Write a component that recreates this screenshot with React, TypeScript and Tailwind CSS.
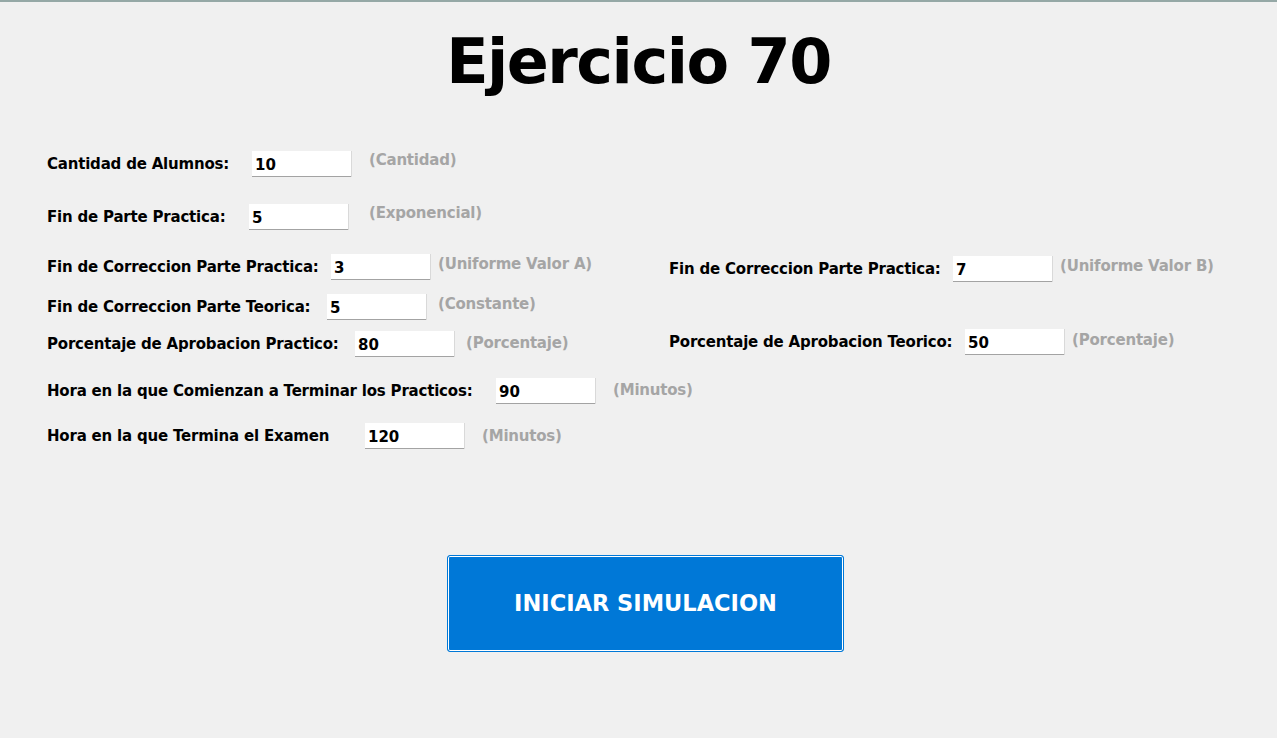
import React from 'react';

const font = { fontFamily: '"DejaVu Sans", sans-serif' };

interface FieldProps {
    label: string;
    value: string;
    hint: string;
    labelW: string;
    hintGap: string;
    hintLift: string;
}

const Field: React.FC<FieldProps> = ({ label, value, hint, labelW, hintGap, hintLift }) => (
    <div className="flex items-center h-[26px]">
        <span className={`${labelW} shrink-0 text-[15px] font-bold text-black whitespace-nowrap tracking-[-0.2px]`}>{label}</span>
        <input
            defaultValue={value}
            className="w-[99px] h-[26px] shrink-0 bg-white border-b border-[#a3a3a3] shadow-[1px_0_0_#d9d9d9] px-[3px] pt-[2px] text-[15px] font-bold text-black outline-none"
            style={font}
        />
        <span className={`${hintGap} ${hintLift} text-[15px] font-bold text-[#a5a5a5] whitespace-nowrap tracking-[-0.2px]`}>{hint}</span>
    </div>
);

export default function App() {
    return (
        <div className="min-h-screen bg-[#f0f0f0] border-t-2 border-[#95a8a6]" style={font}>
            <h1 className="text-center text-[62px] leading-none font-bold text-black tracking-[-1.5px] pt-[29px]">
                Ejercicio 70
            </h1>

            <div className="pl-[47px] pt-[58px]">
                <Field label="Cantidad de Alumnos:" value="10" hint="(Cantidad)" labelW="w-[205px]" hintGap="ml-[18px]" hintLift="mb-[8px]" />

                <div className="mt-[27px]">
                    <Field label="Fin de Parte Practica:" value="5" hint="(Exponencial)" labelW="w-[202px]" hintGap="ml-[21px]" hintLift="mb-[8px]" />
                </div>

                <div className="mt-[24px] flex items-start h-[26px]">
                    <div className="w-[622px] shrink-0">
                        <Field label="Fin de Correccion Parte Practica:" value="3" hint="(Uniforme Valor A)" labelW="w-[284px]" hintGap="ml-[8px]" hintLift="mb-[6px]" />
                    </div>
                    <div className="mt-[2px]">
                        <Field label="Fin de Correccion Parte Practica:" value="7" hint="(Uniforme Valor B)" labelW="w-[284px]" hintGap="ml-[8px]" hintLift="mb-[6px]" />
                    </div>
                </div>

                <div className="mt-[14px]">
                    <Field label="Fin de Correccion Parte Teorica:" value="5" hint="(Constante)" labelW="w-[280px]" hintGap="ml-[12px]" hintLift="mb-[6px]" />
                </div>

                <div className="mt-[11px] flex items-start h-[26px]">
                    <div className="w-[622px] shrink-0">
                        <Field label="Porcentaje de Aprobacion Practico:" value="80" hint="(Porcentaje)" labelW="w-[308px]" hintGap="ml-[12px]" hintLift="mb-[2px]" />
                    </div>
                    <div className="-mt-[2px]">
                        <Field label="Porcentaje de Aprobacion Teorico:" value="50" hint="(Porcentaje)" labelW="w-[296px]" hintGap="ml-[8px]" hintLift="mb-[4px]" />
                    </div>
                </div>

                <div className="mt-[21px]">
                    <Field label="Hora en la que Comienzan a Terminar los Practicos:" value="90" hint="(Minutos)" labelW="w-[449px]" hintGap="ml-[18px]" hintLift="mb-[2px]" />
                </div>

                <div className="mt-[19px]">
                    <Field label="Hora en la que Termina el Examen" value="120" hint="(Minutos)" labelW="w-[318px]" hintGap="ml-[18px]" hintLift="mb-[0px]" />
                </div>
            </div>

            <div className="flex justify-center pt-[106px] pl-[14px]">
                <button
                    className="w-[397px] h-[97px] bg-[#0078d7] border border-[#0078d7] rounded-[3px] shadow-[inset_0_0_0_1px_#ffffff] text-white text-[22.5px] font-bold"
                    style={font}
                >
                    INICIAR SIMULACION
                </button>
            </div>
        </div>
    );
}
